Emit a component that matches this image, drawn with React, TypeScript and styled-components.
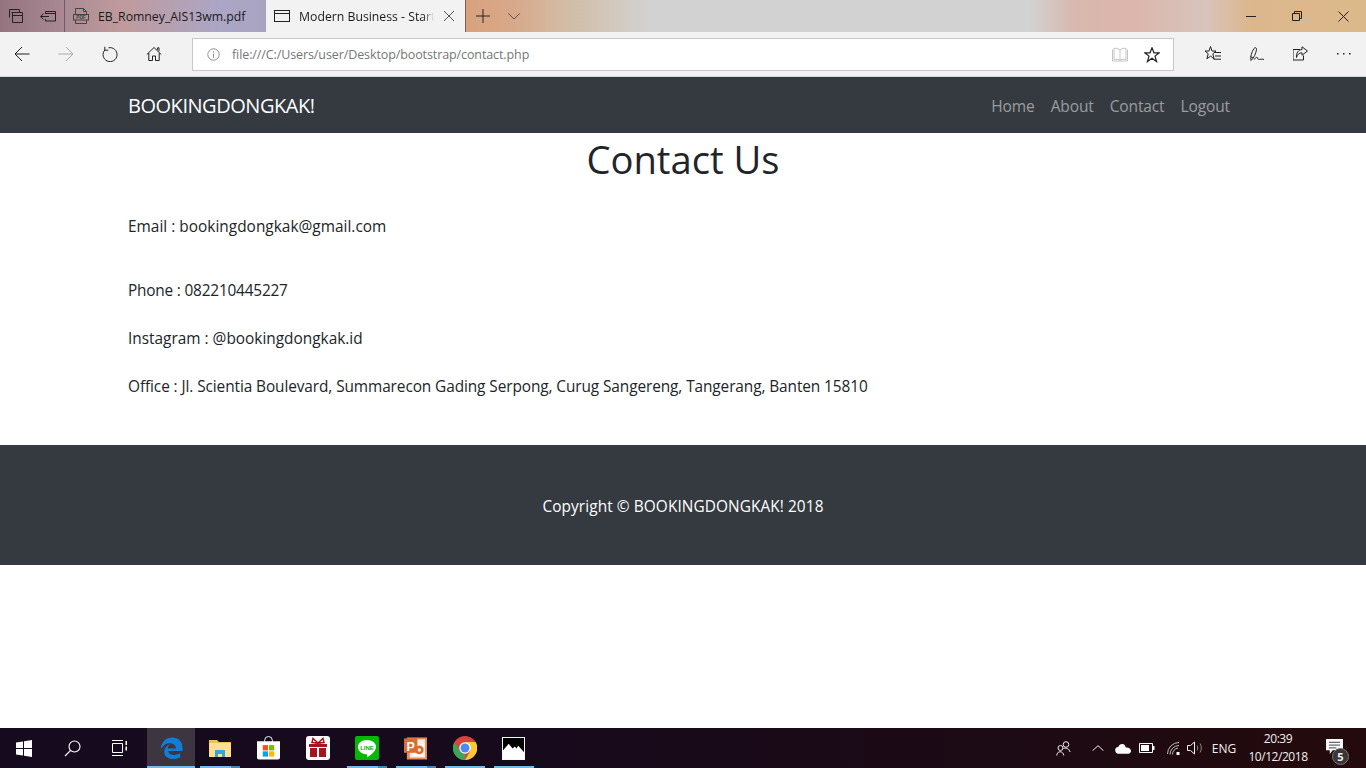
import React from "react";
import styled, { createGlobalStyle } from "styled-components";

const Global = createGlobalStyle`
  html, body { margin: 0; padding: 0; background: #fff; }
  body { font-family: "Open Sans", "Noto Sans", "Liberation Sans", sans-serif; color: #212529; overflow: hidden; }
  * { box-sizing: border-box; }
`;

const Screen = styled.div`
  width: 1366px; height: 768px; display: flex; flex-direction: column; overflow: hidden;
`;
const TitleBar = styled.div`
  height: 32px; display: flex; align-items: stretch; flex: none;
  background: linear-gradient(90deg, #94757f 0, #a98a94 64px, #c09a9c 120px, #aba6c6 220px, #a8a4c0 265px, #d9a27e 466px, #d8a888 510px, #d2bfa9 575px, #d2d2d2 650px, #d2d2d2 1030px, #d8b8ae 1075px, #dcb5ab 1130px, #d8c4bc 1205px, #dcb78e 1250px, #dcb98a 1366px);
`;
const ChromeBtn = styled.div<{ $w?: number }>`
  width: ${p => p.$w ?? 32}px; display: flex; align-items: center; justify-content: center; flex: none; color: #222;
`;
const Tab = styled.div<{ $active?: boolean; $w: number }>`
  width: ${p => p.$w}px; flex: none; display: flex; align-items: center; padding-left: 8px;
  background: ${p => (p.$active ? "#f2f2f2" : "transparent")};
  border-left: ${p => (p.$active ? "none" : "1px solid #6f5a63")};
  border-right: ${p => (p.$active ? "1px solid #7d5c4c" : "none")};
  font-size: 12.25px; color: #1a1a1a; white-space: nowrap; position: relative; overflow: hidden;
`;
const TabLabel = styled.span<{ $w: number; $ml: number; $fade?: boolean }>`
  width: ${p => p.$w}px; margin-left: ${p => p.$ml}px; overflow: hidden; display: block; flex: none;
  ${p => p.$fade ? "mask-image: linear-gradient(90deg, #000 92%, transparent);" : ""}
`;
const TabClose = styled.svg`
  margin-left: 9px; color: #555; flex: none;
`;
const Spacer = styled.div`flex: 1;`;
const Toolbar = styled.div`
  height: 45px; flex: none; background: #f2f2f2; display: flex; align-items: center; border-bottom: 1px solid #d6d6d6;
`;
const ToolBtn = styled.div`
  width: 44px; height: 44px; display: flex; align-items: center; justify-content: center; flex: none;
`;
const Address = styled.div`
  width: 982px; height: 33px; margin: 1px 17px 0 16px; flex: none; background: #fff; border: 1px solid #c8c8c8;
  display: flex; align-items: center; padding-left: 14px; font-size: 12.5px; color: #767676; letter-spacing: -0.1px;
`;
const AddrText = styled.span`margin-left: 12px; flex: 1;`;
const AddrIcon = styled.div`
  width: 32px; display: flex; justify-content: center;
`;
const AddrEnd = styled.div`width: 5px; flex: none;`;
const Viewport = styled.div`flex: 1; background: #fff; display: flex; flex-direction: column;`;
const Navbar = styled.nav`
  height: 56px; background: #343a40; padding: 0 128px; display: flex; align-items: center; justify-content: space-between; flex: none;
`;
const Brand = styled.a`
  font-size: 20px; color: #fff; letter-spacing: -0.47px; line-height: 1; margin-top: 1px;
`;
const NavList = styled.div`display: flex; gap: 16px; margin-right: 8px; margin-top: 2px;`;
const NavLink = styled.a`
  font-size: 15.5px; color: rgba(255,255,255,.5); letter-spacing: -0.12px;
`;
const Main = styled.main`
  height: 312px; padding: 0 128px; flex: none;
`;
const Title = styled.h1`
  margin: 0; padding-top: 2px; font-size: 38.2px; line-height: 48px; font-weight: 400; text-align: center; color: #212529;
`;
const Para = styled.p<{ $top: number; $ls: number }>`
  margin: ${p => p.$top}px 0 0; font-size: 15.4px; line-height: 24px; color: #212529; letter-spacing: ${p => p.$ls}px;
`;
const Footer = styled.footer`
  height: 120px; padding-top: 2px; background: #343a40; color: #fff; display: flex; align-items: center; justify-content: center; font-size: 15.4px; letter-spacing: 0.08px; flex: none;
`;
const Taskbar = styled.div`
  height: 40px; flex: none; display: flex; align-items: center;
  background: linear-gradient(90deg, #160a1e 0, #170a1d 500px, #1c0a14 1000px, #240a0c 1366px);
  color: #fff;
`;
const TaskBtn = styled.div<{ $w?: number; $active?: boolean; $line?: boolean; $split?: boolean; $mr?: number }>`
  position: relative; width: ${p => p.$w ?? 49}px; height: 40px; flex: none; display: flex; align-items: center; justify-content: center;
  margin-right: ${p => p.$mr ?? 0}px;
  background: ${p => (p.$active ? "#3d3540" : "transparent")};
  &::after {
    content: ""; display: ${p => (p.$line ? "block" : "none")}; position: absolute; left: ${p => (p.$active ? 0 : 5)}px; right: ${p => (p.$active ? 0 : 4)}px; bottom: 0; height: 2px;
    background: ${p => (p.$split ? "linear-gradient(90deg, #76b9ed 0 31px, #4f83ab 31px)" : "#76b9ed")};
  }
`;
const Tray = styled.div<{ $w: number; $mr?: number }>`
  width: ${p => p.$w}px; margin-right: ${p => p.$mr ?? 0}px; height: 40px; flex: none; display: flex; align-items: center; justify-content: center; font-size: 12px; color: #f0f0f0;
`;
const Clock = styled.div`
  width: 78px; flex: none; display: flex; flex-direction: column; align-items: center; font-size: 12px; line-height: 18px; color: #f0f0f0; letter-spacing: -0.45px;
`;
const Note = styled.div`
  width: 34px; margin-right: 15px; height: 40px; flex: none; display: flex; align-items: center; justify-content: center; position: relative;
`;
const NoteGlyph = styled.svg`
  margin-top: -4px;
`;
const Badge = styled.span`
  position: absolute; left: 15px; top: 20px; width: 17px; height: 17px; border-radius: 50%; background: #3b3535; border: 1px solid #777;
  display: flex; align-items: center; justify-content: center; font-size: 11px; font-weight: 700; color: #eee;
`;
const IconSvg = styled.svg<{ $color: string }>`
  display: block; color: ${p => p.$color};
`;

const S = { fill: "none", stroke: "currentColor", strokeWidth: 1 } as const;

const Icon = ({ size = 16, children, color = "#222" }: { size?: number; children: React.ReactNode; color?: string }) => (
  <IconSvg width={size} height={size} viewBox="0 0 16 16" $color={color}>{children}</IconSvg>
);

const App = () => (
  <Screen>
    <Global />
    <TitleBar>
      <ChromeBtn>
        <Icon><g {...S}><path d="M1.500 9.500V1.500H11.500V4" /><path d="M3.500 4.500H14.500V14.500H4.500V4.500" /><path d="M4.500 7.500H14.500" /></g></Icon>
      </ChromeBtn>
      <ChromeBtn>
        <Icon><g {...S}><path d="M5.500 6V3.500H15.500V13H5.500V11" /><path d="M6 5.500H15.500" /><path d="M0.500 8.500H9M3.500 5.500L.7 8.500 3.500 11.500" /></g></Icon>
      </ChromeBtn>
      <Tab $w={202}>
        <Icon color="#444"><g {...S}><path d="M2.500 6V.5h8l3 3V6" /><path d="M10.500.5v3h3" /><rect x="0.500" y="6.500" width="15" height="5.500" /><path d="M2.500 12v3.500h11V12" /></g><text x="8" y="10.900" fontSize="4.800" fontWeight="700" textAnchor="middle" fill="#444" fontFamily="Liberation Sans">PDF</text></Icon>
        <TabLabel $w={150} $ml={9}>EB_Romney_AIS13wm.pdf</TabLabel>
      </Tab>
      <Tab $w={200} $active>
        <Icon><g {...S}><rect x="0.500" y="2.500" width="15" height="11" /><path d="M0.500 5.500h15" /></g></Icon>
        <TabLabel $w={135} $ml={9} $fade>Modern Business - Start Bootstrap</TabLabel>
        <TabClose width="12" height="12" viewBox="0 0 12 12"><path d="M1 1l10 10M11 1L1 11" fill="none" stroke="currentColor" /></TabClose>
      </Tab>
      <ChromeBtn $w={34}>
        <Icon><path d="M8 1v14M1 8h14" {...S} /></Icon>
      </ChromeBtn>
      <ChromeBtn $w={28}>
        <Icon size={14} color="#444"><path d="M1.500 5L8 11.500 14.500 5" {...S} /></Icon>
      </ChromeBtn>
      <Spacer />
      <ChromeBtn $w={46}><svg width="10" height="1"><rect width="10" height="1" fill="#222" /></svg></ChromeBtn>
      <ChromeBtn $w={46}>
        <svg width="10" height="10" viewBox="0 0 10 10"><path d="M.5 2.500h7v7h-7zM2.500 2.500v-2h7v7h-2" fill="none" stroke="#222" /></svg>
      </ChromeBtn>
      <ChromeBtn $w={46}>
        <svg width="11" height="11" viewBox="0 0 11 11"><path d="M.5.5l10 10M10.500.5l-10 10" fill="none" stroke="#222" /></svg>
      </ChromeBtn>
    </TitleBar>
    <Toolbar>
      <ToolBtn><Icon><path d="M15.500 8H1M8 1L1 8l7 7" {...S} /></Icon></ToolBtn>
      <ToolBtn><Icon color="#aaa"><path d="M.5 8H15M8 1l7 7-7 7" {...S} /></Icon></ToolBtn>
      <ToolBtn><Icon><g {...S}><path d="M6.500 1.800A7 7 0 1 1 2.800 4" /><path d="M2.800.8V4.200H6.200" /></g></Icon></ToolBtn>
      <ToolBtn><Icon><g {...S}><path d="M.8 8.500L8 1.500l7.200 7" /><path d="M11.500 3.800V1.800H13V5.300" /><path d="M2.800 7v7.500H6.500V10h3v4.500h3.700V7" /></g></Icon></ToolBtn>
      <Address>
        <Icon size={13} color="#777"><g {...S}><circle cx="8" cy="8" r="7" /><path d="M8 7v5M8 4v1.600" /></g></Icon>
        <AddrText>file:///C:/Users/user/Desktop/bootstrap/contact.php</AddrText>
        <AddrIcon>
          <Icon color="#c4c4c4"><g {...S}><path d="M.5 2.500V14h15V2.500" /><path d="M2 12.500V1.500c2.500-.5 5 0 6 1.500 1-1.500 3.500-2 6-1.500v11c-2.500-.5-5 0-6 1-1-1-3.500-1.500-6-1z" /><path d="M8 3v10.500" /></g></Icon>
        </AddrIcon>
        <AddrIcon>
          <Icon><path d="M8 .8l2 5h5.200l-4.200 3.300 1.600 5.500L8 11.300l-4.600 3.300L5 9.100.8 5.800H6z" {...S} strokeWidth={1.200} /></Icon>
        </AddrIcon>
        <AddrEnd />
      </Address>
      <ToolBtn>
        <Icon><g {...S}><path d="M5.500.5l1.500 4.500h4L7.800 7.800l1.300 5-3.600-2.700L1.900 12.800l1.300-5L0 5h4z" /><path d="M9.500 6.500H16M10 10H16M8.500 13.200H16" /></g></Icon>
      </ToolBtn>
      <ToolBtn>
        <Icon><g {...S} transform="translate(0 1)"><path d="M2 13.500C1.200 10 2.500 5 5 1.500c.8-1.300 2.800-1 2.500 1C7 6 5 11 2 13.500z" /><path d="M1.500 9.500l2.500 1.500" /><path d="M5 12.500c1.500-1 2-2 2.500-2.500s.5 1.500 1.500 2c2 1 3.500-.5 6 .5" /></g></Icon>
      </ToolBtn>
      <ToolBtn>
        <Icon><g {...S} transform="translate(-1.500 0)"><path d="M8.500 3.500H1.500V14H12V9.500" /><path d="M10.500.8L16 5l-5.500 4.200V6.800C8 6.800 6 8 5 11.500c-.5-4.500 2-7.800 5.500-8z" /></g></Icon>
      </ToolBtn>
      <ToolBtn>
        <Icon><g fill="#222"><rect x="0" y="7" width="1.500" height="1.500" /><rect x="6" y="7" width="1.500" height="1.500" /><rect x="12" y="7" width="1.500" height="1.500" /></g></Icon>
      </ToolBtn>
    </Toolbar>
    <Viewport>
      <Navbar>
        <Brand>BOOKINGDONGKAK!</Brand>
        <NavList>
          <NavLink>Home</NavLink>
          <NavLink>About</NavLink>
          <NavLink>Contact</NavLink>
          <NavLink>Logout</NavLink>
        </NavList>
      </Navbar>
      <Main>
        <Title>Contact Us</Title>
        <Para $top={32} $ls={0.02}>Email : bookingdongkak@gmail.com</Para>
        <Para $top={40} $ls={-0.2}>Phone : 082210445227</Para>
        <Para $top={24} $ls={0}>Instagram : @bookingdongkak.id</Para>
        <Para $top={24} $ls={-0.09}>Office : Jl. Scientia Boulevard, Summarecon Gading Serpong, Curug Sangereng, Tangerang, Banten 15810</Para>
      </Main>
      <Footer>Copyright © BOOKINGDONGKAK! 2018</Footer>
    </Viewport>
    <Taskbar>
      <TaskBtn $w={48}>
        <svg width="16" height="17" viewBox="0 0 16 17"><path d="M0 2.500L7 1.500V8H0zM8 1.300L16 0v8H8zM0 9h7v6.500L0 14.500zM8 9h8v8L8 15.700z" fill="#fff" /></svg>
      </TaskBtn>
      <TaskBtn $w={48}>
        <svg width="17" height="17" viewBox="0 0 17 17"><g fill="none" stroke="#fff" strokeWidth="1.100"><circle cx="10.500" cy="6.500" r="5.500" /><path d="M6.500 10.500L1 16" /></g></svg>
      </TaskBtn>
      <TaskBtn $w={48} $mr={3}>
        <svg width="16" height="16" viewBox="0 0 16 16"><g fill="none" stroke="#fff"><path d="M0 .5h11M0 15.500h11M.5 3.500h10v9H.5z" /></g><path d="M13.500 1H15v4h-1.500zM13.500 6.500H15v4h-1.500z" fill="#fff" /></svg>
      </TaskBtn>
      <TaskBtn $w={48} $active $line>
        <svg width="23" height="24" viewBox="0 0 24 24"><path d="M1 13C1 6 6 1 13 1c6 0 10.500 4 10.500 10.500v3.500H8.500c.5 4.500 7 5.500 12.500 2.500v4.500c-7 3-17 1.500-16.500-6.500C4.800 11 8 8.500 11 8c-2.500 1.500-3 3.200-3 4.500h8.500C17 7.500 9 5 4.500 9 3 10.300 2 11.500 1 13z" fill="#0d7fd8" /></svg>
      </TaskBtn>
      <TaskBtn $line $split>
        <svg width="22" height="17" viewBox="0 0 22 17"><path d="M0 0h8l2 2h12v3H0z" fill="#e9c15c" /><path d="M0 3h22v14H0z" fill="#fce08f" /><path d="M6 10h10v7h-3v-3H9v3H6z" fill="#3aa1dc" /></svg>
      </TaskBtn>
      <TaskBtn>
        <svg width="23" height="24" viewBox="0 0 24 24"><path d="M0 5h24v17a2 2 0 0 1-2 2H2a2 2 0 0 1-2-2z" fill="#fff" /><path d="M8 8V4a4 4 0 0 1 8 0v4" fill="none" stroke="#fff" /><path d="M6 9h5.500v5.500H6z" fill="#f25022" /><path d="M12.500 9H18v5.500h-5.500z" fill="#7fba00" /><path d="M6 15.500h5.500V21H6z" fill="#00a4ef" /><path d="M12.500 15.500H18V21h-5.500z" fill="#ffb900" /></svg>
      </TaskBtn>
      <TaskBtn>
        <svg width="24" height="24" viewBox="0 0 24 24"><rect width="24" height="24" rx="3" fill="#fff" /><path d="M3 8h18v3H3zM4 12h7v9H4zM13 12h7v9h-7z" fill="#a3161c" /><path d="M12 7L7 2.500 6 6.500zM12 7l5-4.500 1 4z" fill="none" stroke="#a3161c" strokeWidth="1.500" /></svg>
      </TaskBtn>
      <TaskBtn $line $split>
        <svg width="24" height="24" viewBox="0 0 24 24"><rect width="24" height="24" rx="2" fill="#00b900" /><path d="M12 4c5.500 0 9 3 9 7 0 4-5 8-9 10.500 .5-2 .5-3-1-3.200C6.500 18 3 15 3 11c0-4 3.500-7 9-7z" fill="#fff" /><text x="12" y="13.500" fontSize="6" fontWeight="700" textAnchor="middle" fill="#00b900" fontFamily="Liberation Sans">LINE</text></svg>
      </TaskBtn>
      <TaskBtn $line $split>
        <svg width="23" height="24" viewBox="0 0 24 24"><path d="M3 1h21v23H3z" fill="#e98a55" /><path d="M6 3h16v19H6z" fill="#fbeee4" /><path d="M15 8h6v12H8z" fill="#fff" /><circle cx="16" cy="14" r="4.500" fill="#dd6b33" /><circle cx="16" cy="14" r="1.800" fill="#fbeee4" /><rect x="0" y="2" width="14" height="15" fill="#dd6b33" /><text x="7" y="15" fontSize="13" fontWeight="700" textAnchor="middle" fill="#fff" fontFamily="Liberation Sans">P</text></svg>
      </TaskBtn>
      <TaskBtn $line>
        <svg width="24" height="24" viewBox="0 0 24 24"><circle cx="12" cy="12" r="12" fill="#db4437" /><path d="M12 24A12 12 0 0 1 1.600 6L7 15.500 12 18z" fill="#3aa757" /><path d="M12 6h10.600A12 12 0 0 1 12 24l5.200-9z" fill="#fcc934" /><circle cx="12" cy="12" r="5.800" fill="#fff" /><circle cx="12" cy="12" r="4.500" fill="#4a8af4" /></svg>
      </TaskBtn>
      <TaskBtn $line>
        <svg width="23" height="23" viewBox="0 0 24 24"><rect x=".5" y=".5" width="23" height="23" fill="#000" stroke="#fff" /><path d="M1 23V14l6-7 4 5 2.500-2 1.500 2 2-3 6 7v7z" fill="#fff" /></svg>
      </TaskBtn>
      <Spacer />
      <Tray $w={32} $mr={2}>
        <svg width="15" height="15" viewBox="0 0 15 15"><g fill="none" stroke="#eee"><circle cx="10" cy="3.500" r="2.800" /><circle cx="4.500" cy="7" r="2.500" /><path d="M.8 14.500c0-5 6.500-5 7 0M7.500 7.500c3-1 6 .5 6.500 3.500" /></g></svg>
      </Tray>
      <Tray $w={34}>
        <svg width="12" height="6" viewBox="0 0 12 6"><path d="M.5 5.700L6 .7l5.500 5" fill="none" stroke="#eee" /></svg>
      </Tray>
      <Tray $w={16}>
        <svg width="17" height="11" viewBox="0 0 17 11"><path d="M4 11a3.500 3.500 0 0 1-.5-7C4.500 1 7 0 9 1c1.500.7 2 2 2.500 3.500 3-.5 5.500 1.500 5.500 3.500s-1 3-3 3z" fill="#fff" /></svg>
      </Tray>
      <Tray $w={32}>
        <svg width="16" height="10" viewBox="0 0 16 10"><path d="M.5.500h13v9H.5z" fill="none" stroke="#fff" /><rect x="2" y="2" width="8" height="6" fill="#fff" /><rect x="14" y="3" width="1.500" height="4" fill="#fff" /></svg>
      </Tray>
      <Tray $w={20}>
        <svg width="13" height="13" viewBox="0 0 13 13"><g fill="none" stroke="#bbb"><path d="M.5 12A11.500 11.500 0 0 1 12 .5M3 12.500A9 9 0 0 1 12 3.500M5.500 12.500A6.500 6.500 0 0 1 11 6" /></g><rect x="9.500" y="10" width="3" height="3" fill="#fff" /></svg>
      </Tray>
      <Tray $w={24} $mr={2}>
        <svg width="17" height="14" viewBox="0 0 17 14"><path d="M.5 4.500h3L7.500 1v12l-4-3.500h-3z" fill="none" stroke="#eee" /><path d="M10 4.500c1 1.500 1 3.500 0 5M13 2.500c1.800 2.800 1.800 6.200 0 9" fill="none" stroke="#888" /></svg>
      </Tray>
      <Tray $w={30}>ENG</Tray>
      <Clock><span>20:39</span><span>10/12/2018</span></Clock>
      <Note>
        <NoteGlyph width="17" height="15" viewBox="0 0 18 16"><path d="M0 0h18v12H7l-3 4v-4H0z" fill="#fff" /><path d="M3 3.500h12M3 6.500h12M3 9.500h8" stroke="#333" /></NoteGlyph>
        <Badge>5</Badge>
      </Note>
    </Taskbar>
  </Screen>
);

export default App;
